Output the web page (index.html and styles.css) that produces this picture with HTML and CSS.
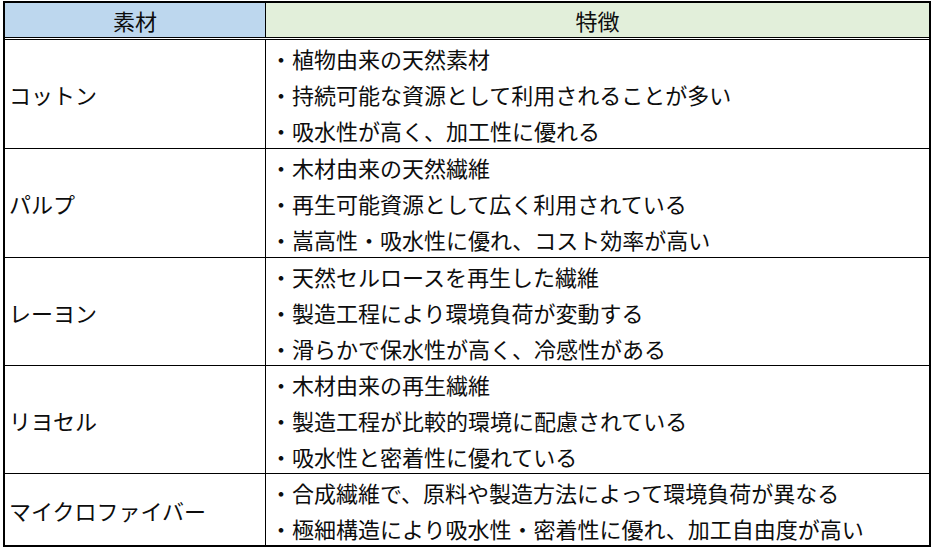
FILE: index.html
```html
<!DOCTYPE html>
<html lang="ja">
<head>
<meta charset="utf-8">
<link rel="stylesheet" href="styles.css">
</head>
<body>
<div class="table">
  <div class="head">
    <div class="hcell mat">素材</div>
    <div class="hcell feat">特徴</div>
  </div>
  <div class="row">
    <div class="name">コットン</div>
    <div class="desc">
      <div class="line">・植物由来の天然素材</div>
      <div class="line">・持続可能な資源として利用されることが多い</div>
      <div class="line">・吸水性が高く、加工性に優れる</div>
    </div>
  </div>
  <div class="row">
    <div class="name">パルプ</div>
    <div class="desc">
      <div class="line">・木材由来の天然繊維</div>
      <div class="line">・再生可能資源として広く利用されている</div>
      <div class="line">・嵩高性・吸水性に優れ、コスト効率が高い</div>
    </div>
  </div>
  <div class="row short">
    <div class="name">レーヨン</div>
    <div class="desc">
      <div class="line">・天然セルロースを再生した繊維</div>
      <div class="line">・製造工程により環境負荷が変動する</div>
      <div class="line">・滑らかで保水性が高く、冷感性がある</div>
    </div>
  </div>
  <div class="row short">
    <div class="name">リヨセル</div>
    <div class="desc">
      <div class="line">・木材由来の再生繊維</div>
      <div class="line">・製造工程が比較的環境に配慮されている</div>
      <div class="line">・吸水性と密着性に優れている</div>
    </div>
  </div>
  <div class="row last">
    <div class="name">マイクロファイバー</div>
    <div class="desc">
      <div class="line">・合成繊維で、原料や製造方法によって環境負荷が異なる</div>
      <div class="line">・極細構造により吸水性・密着性に優れ、加工自由度が高い</div>
    </div>
  </div>
</div>
</body>
</html>
```

FILE: styles.css
```css
html, body {
  margin: 0;
  padding: 0;
  background: #ffffff;
}

body {
  font-family: "Noto Sans CJK JP", "Noto Sans", sans-serif;
  font-size: 22px;
  color: #0d0d0d;
}

.table {
  margin: 1px 0 0 3px;
  width: 924px;
  border: 2px solid #000000;
  display: flex;
  flex-direction: column;
}

.head {
  display: flex;
  height: 34px;
  border-bottom: 3px double #000000;
}

.hcell {
  display: flex;
  align-items: center;
  justify-content: center;
  line-height: 34px;
}

.mat {
  width: 260px;
  background: #bdd7ee;
  border-right: 1px solid #000000;
}

.feat {
  flex: 1;
  background: #e2efda;
}

.row {
  display: flex;
  height: 108px;
  border-bottom: 1px solid #000000;
}

.row.short {
  height: 107px;
}

.row.last {
  height: 71px;
  border-bottom: none;
}

.name {
  width: 256px;
  padding-left: 4px;
  border-right: 1px solid #000000;
  display: flex;
  align-items: center;
}

.desc {
  flex: 1;
  padding-left: 4px;
  display: flex;
  flex-direction: column;
  justify-content: center;
}

.line {
  height: 36px;
  line-height: 36px;
  white-space: nowrap;
}
```
